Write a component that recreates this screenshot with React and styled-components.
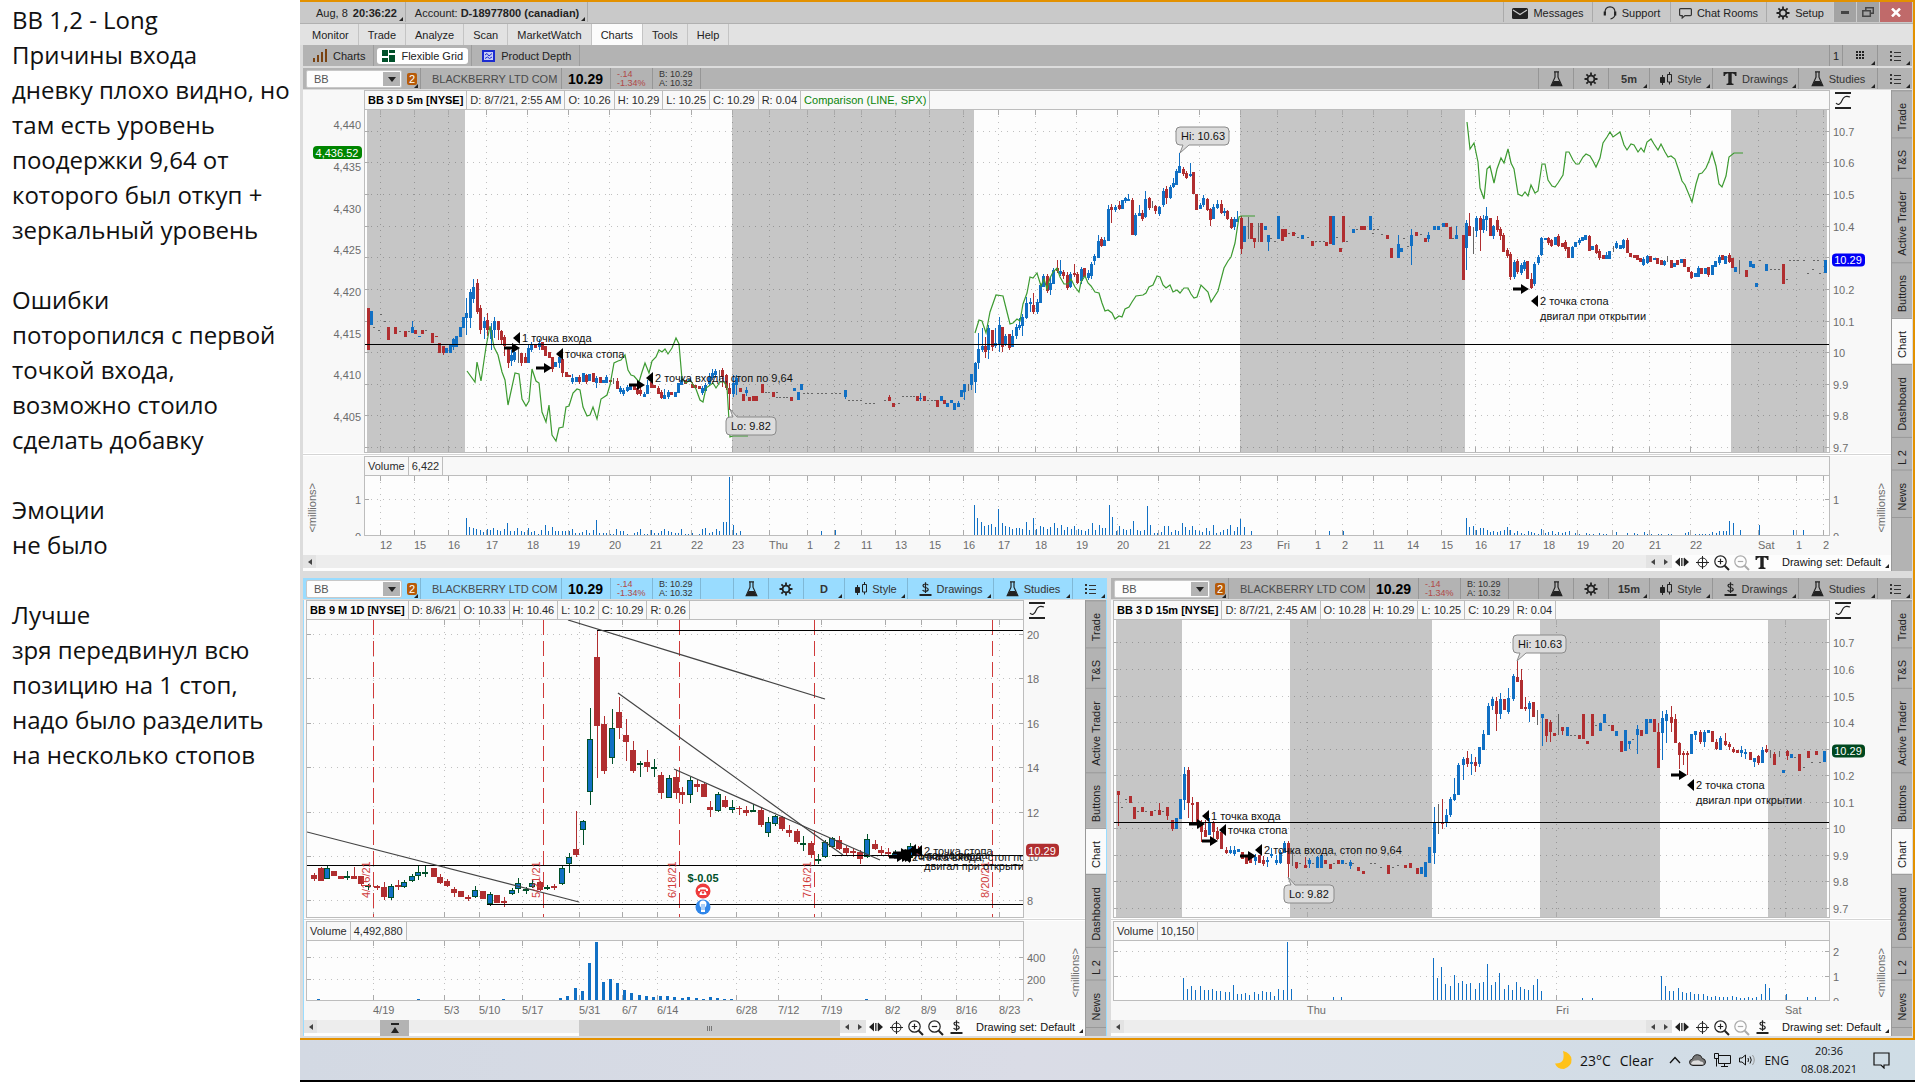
import React from 'react'
import styled, { createGlobalStyle, css } from 'styled-components'

const colors = {
  accent: '#e39100',
  bar: '#c9c9c9',
  menu: '#e2e2e2',
  tool: '#b3b3b3',
  active: '#99dcff',
  panel: '#f8f8f8',
  line: '#bdbdbd',
  up: '#1170c4',
  down: '#b02e30',
  flat: '#666666',
  outline: '#00502a',
  session: '#c6c6c6',
  compare: '#3c9a30',
}

const GlobalStyle = createGlobalStyle`
* { box-sizing: border-box; }
body {
  margin: 0;
  background: #fff;
  font-family: 'Liberation Sans', Arial, sans-serif;
  font-size: 11px;
  color: #222;
}
button, input {
  font: inherit;
  color: inherit;
  border: 0;
  padding: 0;
  background: none;
}
p { margin: 0; }
`

/* ---------- chart data ---------- */

// each entry: kind + x, body top, body bottom [, wick top, wick bottom]
// kinds: b up, r down, g flat with body, w wick only, d dash
const parseCandles = (text) =>
  text.split(',').map((item) => {
    const s = item.trim()
    const [x, top, bottom, hi, lo] = s.slice(1).split(' ').map(Number)
    const end = bottom === undefined ? top + 1 : bottom
    return { kind: s[0], x, top, bottom: end, hi: hi === undefined ? top : hi, lo: lo === undefined ? end : lo }
  })

const dashes = (y, ...xs) => xs.map((x) => ({ kind: 'd', x, top: y, bottom: y + 1, hi: y, lo: y + 1 }))

const bars = (start, pitch, heights) => heights.map((h, i) => [Math.round(start + i * pitch), h])

const mainCandles = [
  ...parseCandles(`r368 308 350, b371 311 325, r388 327 340, r395 327 334, r405 331 337, b412 327 333 321 333, r415 330 334, b419 336 337,
  r422 330 334, r432 333 343, r436 336 337, r439 343 353, r443 346 353 346 355, b446 348 353, b450 345 353, b453 339 347 338 350,
  b456 336 347, b460 327 337, b463 317 328, b466 313 318 298 335, b470 292 318 289 328, b473 287 299 279 303, r477 283 312 279 314,
  r480 308 330 305 334, b484 321 328 317 339, r487 320 330 313 336, b491 330 339 323 350, b494 321 330 317 338, r498 321 330 321 340,
  r501 331 340 330 344, r504 337 346 335 356, r508 347 363 347 368, b511 355 361 350 366, b514 352 360 350 362, w518 349 363,
  r521 353 363 353 366, r525 357 363 353 363, b528 348 363 345 363, b531 344 350 342 352, r535 344 348, b539 343 347 339 350,
  r542 342 350, r545 346 356, r549 352 358, r552 357 369 357 372, b555 362 367, b559 357 363 354 368, r562 359 373 359 377,
  r566 372 377, r569 375 377, b572 378 382 374 384, b576 377 382, r579 377 382 375 384, b583 373 382, r586 375 382 374 384,
  b589 374 381, r593 373 382, b596 378 383 376 388, r600 377 383, b603 380 383, b606 377 383 375 383, r610 380 382, w613 378 384,
  r617 381 389 378 389, b620 388 392 386 394, b623 390 394 388 396, b627 387 391 385 392, b630 386 390, r634 385 390, r637 388 394 386 395,
  r640 390 394 386 396, b644 394 397 392 397, b647 385 394 380 394, r651 382 388 380 388, r654 385 388, r658 388 394 386 394,
  r661 392 398 390 399, b664 395 399 389 399, b668 392 397 390 399, r671 392 395, b675 392 397, b678 383 393, b681 380 385 377 385,
  r685 380 384, b689 379 382, r692 384 388 382 388, r695 385 388, r699 386 389, b702 388 393 386 395, b705 385 391 383 391,
  b709 377 384 373 386, b712 373 378 369 380, b715 371 375 369 378, w719 370 380, r722 370 377 368 387, r726 375 388 374 390,
  r729 388 394 383 410, b733 383 394 375 397, b736 378 385 375 395, r740 388 392, r743 394 401, b746 390 393 387 396, r749 397 401,
  r753 396 401, r756 396 401, r762 384 393, r773 392 397, r791 397 401, b794 388 391, b798 392 400, b801 384 390, b845 390 397 390 399,
  r889 397 401 395 401, r893 403 407, r917 396 401, b920 398 399 393 401, r924 396 401, r937 400 407, b941 396 401, r944 400 404, b947 403 407,
  b951 400 403, b954 403 410, b958 403 407 401 407, b961 390 397, b964 384 392 384 400, w968 384 391, b971 374 385 374 390,
  b975 363 382 362 393, b978 349 363 333 369, b982 346 350 328 352, r985 346 352 337 358, b988 328 350 325 359, r992 330 347 330 351,
  b995 343 346 328 348, b999 325 345 317 352, r1002 327 347 327 352, b1005 336 344 334 346, r1009 334 348 334 350, b1012 336 347 330 347,
  b1016 327 336 324 339, b1019 325 328 318 330, b1022 317 326 314 336, b1026 303 318 297 319, b1030 302 304 298 312, r1033 305 312 293 314,
  b1037 302 312 299 314, b1040 285 303 283 303, b1043 276 287 274 287, r1047 276 291 274 293, b1050 283 290 277 295, b1053 270 284 268 284,
  r1057 268 271 260 273, b1060 271 274 260 276, r1063 272 276 270 279, r1067 275 288 272 290, b1070 274 287 272 288, r1074 273 275 264 277,
  r1077 274 283 272 284, b1081 269 281 267 284, r1084 268 277, b1088 273 278 270 280, b1091 264 276 262 279, b1094 256 261 254 265,
  b1098 241 258 235 258, r1101 239 246 237 247, b1104 240 246 237 246, b1108 209 241 205 241, r1111 207 210 204 223, b1115 207 210 205 212,
  r1119 205 209 201 210, b1122 200 209, b1125 198 201 197 203, b1128 199 201 194 201, r1132 200 235 198 235, b1135 215 235 213 236,
  b1139 213 216 205 216, r1142 213 219 210 221, b1145 199 217 191 218, r1149 198 208 197 210, w1152 201 208, r1155 206 211 205 214,
  b1159 207 214 206 216, b1163 191 205 188 207, r1166 189 198 186 204, b1170 187 198 185 199, b1173 183 187 178 188, b1176 171 185 169 185,
  b1179 166 173 153 173, r1183 169 174 167 176, r1186 173 178 171 179, b1190 174 176 163 177, r1193 172 194, r1196 194 210, b1200 205 209 203 209,
  b1203 198 205 195 207, r1207 199 210 198 211, r1210 209 220 208 226, b1213 207 219 204 219, b1217 204 208 200 209, r1221 204 213 200 214,
  b1224 211 213 208 216, r1227 211 219 210 220, r1231 219 228 217 229, b1234 219 227 217 230, b1237 219 222 211 222, r1241 218 249 216 254,
  b1244 226 242, w1248 217 239, r1251 223 239, r1254 238 242 238 248, w1258 223 242, r1261 223 242, b1265 226 230, b1268 235 242 235 251,
  b1278 216 239, r1282 229 241, r1285 229 237, r1293 232 236, b1302 235 239, r1312 241 246, r1326 242 246, r1330 216 244, b1333 216 245,
  r1340 248 252, r1343 216 242, b1353 229 233, r1361 226 230, r1364 226 230, b1370 216 230, r1387 235 239, r1391 248 258, b1398 244 258 235 258,
  b1401 248 252, b1411 235 246 229 265, r1416 232 236, r1425 238 242, b1428 235 239 232 242, b1434 226 230, b1438 226 230, b1443 223 227,
  r1446 223 227, r1450 227 239, b1456 235 239 226 239, r1463 235 280, b1466 223 248 220 270, r1469 226 236 213 236, w1473 227 254,
  b1476 218 231 216 237, r1480 218 230 216 251, b1483 219 230 215 233, b1486 216 220 207 231, r1490 218 236, b1493 226 236 225 239,
  r1497 220 230 216 232, r1500 229 236 227 240, r1503 235 252 233 252, r1507 250 256 248 258, r1510 254 277 252 280, b1514 262 277 260 279,
  r1517 261 272 259 274, b1521 265 273 263 275, b1524 262 269 260 271, r1527 261 279, r1531 279 288 273 289, b1534 264 284 262 286,
  b1538 257 263 255 265, b1541 238 255 237 256, b1545 238 240, r1548 238 243 237 245, r1551 240 246 239 247, b1555 237 245, r1558 236 246 234 247,
  r1562 243 247, r1565 242 249 240 251, r1568 247 258, b1572 247 258 246 258, b1575 242 247, b1579 240 243 238 245, b1582 237 241, b1585 235 240,
  r1589 236 251 235 251, b1592 246 250, r1596 245 253 244 254, r1599 251 258 249 260, r1603 255 259, b1606 255 259 252 259, b1609 251 259,
  w1613 246 252, b1616 243 248 241 249, b1620 245 249, b1623 240 248 239 249, r1627 240 253 238 253, r1630 253 257, r1634 255 258,
  r1637 255 260, r1640 258 262, b1643 259 265 257 266, b1647 256 263 255 264, r1650 256 262, b1654 258 260, r1657 258 264, r1661 260 265,
  b1664 261 265 260 266, w1667 256 262, r1671 260 268, b1674 263 267, r1677 260 265, b1681 259 263, r1684 259 267, r1688 267 272,
  r1691 272 278 271 279, b1695 273 277, b1698 268 277 266 277, r1701 268 274, b1705 268 274, r1708 267 275 267 277, b1712 265 275,
  b1715 261 267, b1719 257 263 255 265, r1722 255 260, b1725 256 264, r1729 255 262 253 263, r1732 258 268, b1735 267 272, w1739 260 274,
  r1746 270 277, b1750 261 267, b1753 264 268, b1756 283 287, b1766 264 271, r1783 264 284, b1825 260 273`),
  ...dashes(327, 374), ...dashes(314, 381), ...dashes(321, 385), ...dashes(331, 400, 409), ...dashes(330, 426, 379),
  ...dashes(397, 777, 780, 784, 787), ...dashes(393, 804, 808, 812, 818, 822, 826, 832, 836, 840),
  ...dashes(400, 849, 853, 857, 861, 885, 928, 932, 935), ...dashes(403, 866, 870, 874, 899), ...dashes(396, 903, 907, 911, 914),
  ...dashes(392, 766, 769, 777), ...dashes(238, 1271), ...dashes(241, 1275, 1316, 1320, 1324, 1347), ...dashes(233, 1289, 1295, 1373),
  ...dashes(237, 1298, 1308, 1337), ...dashes(229, 1374, 1378, 1357), ...dashes(234, 1382, 1421), ...dashes(238, 1404, 1453),
  ...dashes(246, 1408), ...dashes(260, 1760, 1790, 1794, 1798, 1804, 1814, 1818), ...dashes(269, 1771, 1775, 1779, 1813), ...dashes(279, 1787),
  ...dashes(273, 1808, 1820),
]

const comparison = [
  '467,371 475,382 477,362 481,381 486,347 490,326 494,347 498,355 502,372 505,380 508,405 515,373 519,374 522,399 526,406 529,401 532,369 536,381 539,383 542,412 546,422 549,405 552,435 556,441 559,428 563,427 566,407 569,406 573,393 577,389 580,390 583,407 587,416 590,415 593,407 597,419 601,399 607,395 610,385 614,363 618,361 621,360 625,355 628,370 631,375 634,376 639,382 642,372 645,363 649,373 652,361 656,357 659,350 662,352 665,349 668,354 672,348 676,338 679,344 682,379 686,383 690,380 696,389 700,400 703,402 706,388 713,383 716,388 720,382 724,382 727,387 730,437 733,436 748,436',
  '975,333 979,320 982,321 986,333 990,312 996,295 1003,296 1006,308 1010,324 1013,323 1017,319 1020,321 1023,304 1027,293 1030,277 1033,278 1037,273 1041,286 1044,279 1047,289 1050,278 1053,272 1057,268 1060,277 1064,284 1068,284 1071,279 1075,287 1079,292 1081,282 1085,276 1088,283 1091,286 1095,292 1099,293 1102,303 1105,311 1108,310 1112,313 1115,319 1119,316 1122,317 1125,309 1129,307 1132,302 1136,296 1143,295 1146,293 1149,287 1153,285 1157,276 1160,277 1163,285 1166,288 1170,285 1173,292 1177,290 1180,293 1184,288 1188,288 1191,294 1194,298 1197,297 1201,285 1208,292 1211,302 1218,291 1224,268 1228,261 1231,257 1235,243 1239,217 1241,216 1255,216',
  '1467,122 1470,149 1474,143 1478,162 1480,188 1484,199 1487,169 1490,166 1494,183 1497,169 1501,158 1504,163 1508,149 1511,163 1514,169 1518,194 1522,196 1525,192 1528,196 1531,185 1535,193 1538,191 1542,164 1545,164 1548,180 1552,186 1555,187 1558,183 1563,175 1566,152 1569,152 1573,160 1576,164 1579,164 1583,157 1586,154 1590,156 1593,161 1596,167 1600,158 1603,143 1607,137 1610,132 1613,137 1620,132 1624,145 1627,150 1631,144 1634,145 1638,152 1641,148 1644,152 1647,142 1651,139 1654,144 1658,150 1661,144 1665,152 1668,157 1671,156 1675,159 1679,171 1682,181 1685,185 1692,202 1696,184 1699,174 1702,173 1706,168 1709,161 1712,152 1716,166 1719,184 1722,187 1726,176 1729,157 1734,153 1743,153',
]

const mainVolume = [
  ...bars(466, 3.42, [17, 8, 7, 6, 5, 3, 6, 5, 7, 5, 4, 6, 12, 4, 4, 7, 4, 3, 7, 3, 4, 1, 5, 10, 4, 8, 4, 4, 4, 4, 4, 6, 2, 2, 3, 5, 2, 5, 15, 2, 2, 2, 1, 1, 6, 4, 4, 1, 0, 2, 3, 6, 1, 1, 5, 2, 2, 4, 6, 4, 3, 2, 2, 6, 1, 1, 2, 0, 1, 6, 7, 2, 3, 6, 4, 13, 13, 58, 10, 2, 4]),
  [821, 4], [835, 5],
  ...bars(974, 3.46, [30, 17, 13, 9, 10, 11, 8, 26, 12, 9, 8, 6, 7, 7, 6, 13, 5, 17, 6, 9, 8, 6, 8, 12, 7, 10, 5, 8, 6, 9, 6, 5, 4, 6, 12, 5, 10, 7, 7, 30, 18, 4, 9, 6, 5, 6, 14, 5, 4, 5, 29, 10, 2, 2, 3, 9, 9, 3, 5, 4, 12, 8, 5, 9, 5, 4, 3, 7, 4, 10, 2, 3, 5, 6, 10, 4, 8, 16, 8, 0, 4]),
  [1329, 4], [1343, 4],
  ...bars(1466, 3.42, [17, 8, 9, 5, 7, 7, 5, 3, 4, 3, 4, 5, 8, 5, 2, 4, 2, 1, 4, 3, 2, 1, 6, 2, 3, 4, 1, 3, 2, 3, 4, 0, 2, 1, 0, 2, 1, 1, 0, 2, 1, 1, 0, 0, 3, 0, 0, 2, 0, 2, 1, 0, 3, 1, 1, 0, 1, 1, 0, 1, 1, 0, 0, 0, 2, 3, 0, 1, 1, 1, 1, 1, 3, 2, 4, 4, 4, 14, 12, 0, 5]),
  [1759, 10], [1793, 5], [1803, 5],
]

const dayCandles = parseCandles(`r314 875 879 873 881, r321 868 881 867 881, b327 868 879 866 879, r334 871 876, r341 876 879, g347 876 878 871 880,
  r354 876 879 867 879, r361 876 884 876 886, g368 885 887 884 890, r377 886 888 885 890, r384 887 897 882 900, b391 886 898 884 900, r398 885 887 880 890,
  b404 882 887 880 888, b412 876 881 874 882, b418 872 876 865 880, g425 872 874 865 877, r434 868 877, r440 877 883 874 884, r447 881 886 879 887,
  r454 889 893 887 897, r461 891 897, r468 897 899 895 901, b475 890 897 886 898, r483 891 899, b490 894 904 892 906, r497 895 903, r504 901 903 897 907,
  b512 890 894 888 895, b518 883 889 878 893, g526 889 891 887 894, b532 883 887 880 888, r540 882 890 881 891, g547 887 889 885 890, r554 886 888 884 890,
  b562 868 884 866 885, b569 857 864 853 873, r576 849 855 811 857, b583 821 830 820 845, b590 739 792 708 805, r597 657 726 630 778,
  r604 724 771 716 774, b612 728 758 709 764, r619 712 728 697 739, r626 735 742 719 761, r633 750 771 741 773, g640 763 765 761 777,
  r647 762 767 750 772, g654 767 769 759 777, r661 775 793 772 799, b669 778 798 775 798, r676 777 793 770 799, r682 792 795 787 804,
  b690 780 795 777 803, r697 784 787 780 792, r704 784 797 782 797, r710 807 810 801 817, b718 794 811 792 812, r725 800 807 796 808,
  b732 807 810 800 813, r739 808 809 806 815, r746 810 813 806 816, g753 810 812 804 812, r761 810 825 808 827, b768 822 833 817 837,
  b775 816 824 815 826, r782 817 829 816 831, r789 830 833 825 837, r797 831 842 829 844, b803 843 845 836 851, r811 843 855 841 858,
  g818 859 861 854 864, b825 842 857 840 858, b832 838 847 837 848, r839 840 849 836 850, r846 848 853 846 856, r853 851 853 848 857,
  r860 852 859 850 864, b867 839 857 834 858, r875 844 849 840 850, r881 850 853 846 856, r888 852 854 848 857, b895 853 856 850 858,
  r902 854 858 851 860, b910 846 858 843 860, r918 850 854 846 857`)

const quarterCandles = [
  ...parseCandles(`r1118 791 795 791 826, r1130 796 803, r1134 807 819, r1142 807 812, r1151 811 816, r1159 810 815 803 815, r1167 807 816 807 820,
  r1172 820 829 820 831, b1176 818 829, b1180 799 819, b1184 774 800 767 810, r1188 770 803 767 818, r1192 803 805 797 825, r1197 802 823 802 827,
  r1201 823 832 820 842, r1205 830 837 820 837, b1209 822 835 818 835, r1213 823 832 821 838, r1217 831 839 827 840, r1221 832 849 830 849,
  r1226 850 853 847 854, b1230 850 853 846 854, b1234 850 854 846 856, b1238 849 852, r1242 852 859, r1246 857 864, r1250 857 863,
  b1255 857 861 854 865, r1259 855 863, r1263 860 864 856 866, b1267 860 862 857 867, b1271 854 856 848 858, b1276 860 863 855 865,
  b1280 852 863 850 864, b1284 843 853 841 853, r1288 843 864 841 877, w1292 850 866, r1296 862 868 862 869, r1305 865 868 857 868, b1309 860 864 858 868,
  b1317 857 868 856 868, b1321 855 868, r1325 860 864, r1330 864 869, r1338 860 864, b1342 860 864, b1350 862 866 860 869,
  r1358 867 871, r1363 871 874, r1388 865 874, r1405 865 868, r1410 863 868, r1417 868 874, b1421 867 874, b1425 862 877, b1429 847 863,
  b1434 822 853 807 864, w1438 804 834, r1442 822 824 799 829, b1446 815 823 809 827, b1450 799 815 797 817, b1454 794 800 778 801,
  b1458 765 795 763 795, b1463 759 765 757 780, r1467 758 764 751 767, b1471 762 764 754 775, r1475 762 766 757 772, b1479 747 764 747 767,
  b1483 734 750 730 750, b1488 706 735 703 735, b1492 699 706 697 710, r1496 701 714 697 731, b1500 699 714 693 719, r1504 699 710,
  b1508 698 712 688 714, b1513 676 699 674 701, r1517 677 682 661 682, r1521 680 709 669 709, r1525 707 709 697 711, b1529 703 709 701 722,
  r1533 702 717, w1537 710 725, b1542 714 718 714 746, r1546 719 736 719 742, r1550 722 732 720 742, r1554 733 736, w1558 714 735,
  r1562 727 731 727 735, b1567 727 736, r1579 735 739, r1583 714 739, r1587 741 744, r1592 714 736, b1600 723 731, b1604 714 723,
  r1612 725 731, b1616 731 736, r1621 741 752, b1625 730 751, b1629 741 744 741 749, b1637 729 735 725 754, r1641 730 736, b1646 719 734,
  b1650 719 723, r1654 719 732, r1658 732 768 723 768, b1662 718 733 711 760, b1666 714 721 710 743, r1671 717 723 706 732, r1675 719 743 714 743,
  r1679 743 755 742 769, r1683 753 755 751 765, r1687 753 755 751 775, b1691 734 754, b1695 731 735 731 740, r1700 732 742 730 744,
  b1704 732 742 730 747, b1708 730 733, r1712 731 742, r1716 742 749 739 750, b1720 738 750 736 750, r1725 741 745 733 746, r1729 744 747 742 750,
  r1733 749 752 747 753, r1737 750 753, b1741 750 753 746 757, b1745 752 754 749 759, r1750 752 760, b1754 758 762 758 767, r1758 756 763 755 765,
  b1762 750 763 747 763, r1766 749 752 745 753, w1770 750 758, r1774 754 765 752 765, w1779 751 757, b1783 770 773, r1787 751 756 750 760,
  b1791 754 758, r1799 754 771, r1808 751 758, r1816 751 755, b1824 751 762`),
  ...dashes(807, 1122), ...dashes(799, 1126), ...dashes(811, 1138, 1146, 1163), ...dashes(810, 1155), ...dashes(863, 1353, 1371, 1375, 1300, 1313, 1334, 1346),
  ...dashes(867, 1381, 1393), ...dashes(865, 1398), ...dashes(735, 1571, 1575), ...dashes(725, 1596, 1609), ...dashes(739, 1633), ...dashes(757, 1795),
  ...dashes(767, 1804), ...dashes(762, 1812, 1820),
]

const mainChart = {
  name: 'main',
  x: 365, y: 110, w: 1464, h: 342, candleWidth: 3,
  title: 'BB 3 D 5m [NYSE]',
  cells: ['D: 8/7/21, 2:55 AM', 'O: 10.26', 'H: 10.29', 'L: 10.25', 'C: 10.29', 'R: 0.04'],
  study: 'Comparison (LINE, SPX)',
  interval: '5m',
  gutter: 61,
  textTool: true,
  sessions: [[367, 465], [732, 974], [1240, 1465], [1731, 1827]],
  prices: [['10.7', 131], ['10.6', 162], ['10.5', 194], ['10.4', 226], ['10.2', 289], ['10.1', 321], ['10', 352], ['9.9', 384], ['9.8', 415], ['9.7', 447]],
  hidden: [257],
  left: [['4,440', 124], ['4,435', 166], ['4,430', 208], ['4,425', 249], ['4,420', 291], ['4,415', 333], ['4,410', 374], ['4,405', 416]],
  leftTag: ['4,436.52', 152, '#008500'],
  tag: ['10.29', 259, '#0000f5', 33],
  times: [[380, '12'], [414, '15'], [448, '16'], [486, '17'], [527, '18'], [568, '19'], [609, '20'], [650, '21'], [691, '22'], [732, '23'], [769, 'Thu'], [807, '1'], [834, '2'], [861, '11'], [895, '13'], [929, '15'], [963, '16'], [998, '17'], [1035, '18'], [1076, '19'], [1117, '20'], [1158, '21'], [1199, '22'], [1240, '23'], [1277, 'Fri'], [1315, '1'], [1342, '2'], [1373, '11'], [1407, '14'], [1441, '15'], [1475, '16'], [1509, '17'], [1543, '18'], [1577, '19'], [1612, '20'], [1649, '21'], [1690, '22'], [1758, 'Sat'], [1796, '1'], [1823, '2']],
  candles: mainCandles,
  compare: comparison,
  levels: [[365, 1829, 344]],
  trends: [],
  notes: [
    { arrow: [520, 348], tip: [513, 338], text: ['1 точка входа'] },
    { arrow: [552, 368], tip: [556, 354], text: ['точка стопа'] },
    { arrow: [645, 385], tip: [646, 378], text: ['2 точка входа, стоп по 9,64'] },
    { arrow: [1529, 289], tip: [1531, 301], text: ['2 точка стопа', 'двигал при открытии'] },
  ],
  hi: { at: [1180, 153], text: 'Hi: 10.63' },
  lo: { at: [730, 409], text: 'Lo: 9.82' },
  volume: { value: '6,422', y: 476, ticks: [['1', 499]], bars: mainVolume, barWidth: 1, leftLabels: true },
}

const dayChart = {
  name: 'day',
  x: 307, y: 620, w: 716, h: 297, candleWidth: 6, outlined: true,
  title: 'BB 9 M 1D [NYSE]',
  cells: ['D: 8/6/21', 'O: 10.33', 'H: 10.46', 'L: 10.2', 'C: 10.29', 'R: 0.26'],
  interval: 'D',
  gutter: 2,
  zoomedIn: true,
  sessions: [],
  prices: [['20', 634], ['18', 678], ['16', 723], ['14', 767], ['12', 812], ['10', 856], ['8', 900]],
  hidden: [],
  tag: ['10.29', 849, '#b02e30', 33],
  times: [[373, '4/19'], [444, '5/3'], [479, '5/10'], [522, '5/17'], [579, '5/31'], [622, '6/7'], [657, '6/14'], [736, '6/28'], [778, '7/12'], [821, '7/19'], [885, '8/2'], [921, '8/9'], [956, '8/16'], [999, '8/23']],
  expirations: [[373, '4/16/21'], [543, '5/21/21'], [679, '6/18/21'], [814, '7/16/21'], [992, '8/20/21']],
  candles: dayCandles,
  compare: [],
  levels: [[597, 1023, 630], [307, 1023, 865], [487, 1023, 904], [832, 1023, 855]],
  trends: [[568, 620, 825, 699], [618, 693, 843, 855], [674, 769, 880, 860], [307, 832, 579, 902]],
  notes: [
    { arrow: [905, 857], tip: [899, 855], text: [] },
    { arrow: [910, 857], tip: [904, 856], text: ['точка стопа'] },
    { arrow: [909, 853], tip: [909, 850], text: ['1 точка входа'], drop: 5 },
    { arrow: [913, 857], tip: [903, 857], text: ['2 точка входа, стоп по 9,64'] },
    { arrow: [920, 851], tip: [915, 851], text: ['2 точка стопа', 'двигал при открытии'] },
  ],
  event: { x: 703, y: 877 },
  volume: { value: '4,492,880', y: 941, ticks: [['400', 957], ['200', 979]], barWidth: 3, bars: [[318, 1], [418, 1], [503, 1], [560, 2], [567, 4], [575, 12], [582, 9], [589, 37], [596, 58], [603, 18], [610, 21], [617, 17], [624, 10], [631, 7], [639, 5], [646, 4], [653, 3], [660, 4], [667, 4], [674, 3], [682, 2], [688, 3], [696, 2], [703, 1], [710, 3], [717, 2], [724, 1], [731, 1], [866, 1]] },
}

const quarterChart = {
  name: 'quarter',
  x: 1114, y: 620, w: 715, h: 297, candleWidth: 3,
  title: 'BB 3 D 15m [NYSE]',
  cells: ['D: 8/7/21, 2:45 AM', 'O: 10.28', 'H: 10.29', 'L: 10.25', 'C: 10.29', 'R: 0.04'],
  interval: '15m',
  gutter: 2,
  sessions: [[1116, 1182], [1290, 1432], [1540, 1660], [1768, 1827]],
  prices: [['10.7', 642], ['10.6', 669], ['10.5', 696], ['10.4', 722], ['10.2', 775], ['10.1', 802], ['10', 828], ['9.9', 855], ['9.8', 881], ['9.7', 908]],
  hidden: [749],
  tag: ['10.29', 750, '#00481f', 33],
  times: [[1307, 'Thu'], [1556, 'Fri'], [1785, 'Sat']],
  candles: quarterCandles,
  compare: [],
  levels: [[1114, 1829, 822]],
  trends: [],
  notes: [
    { arrow: [1205, 824], tip: [1202, 816], text: ['1 точка входа'] },
    { arrow: [1218, 841], tip: [1219, 830], text: ['точка стопа'] },
    { arrow: [1256, 856], tip: [1255, 850], text: ['2 точка входа, стоп по 9,64'] },
    { arrow: [1687, 775], tip: [1687, 785], text: ['2 точка стопа', 'двигал при открытии'] },
  ],
  hi: { at: [1517, 661], text: 'Hi: 10.63' },
  lo: { at: [1288, 877], text: 'Lo: 9.82' },
  volume: {
    value: '10,150', y: 941, ticks: [['2', 951], ['1', 976]], barWidth: 1,
    bars: [
      ...bars(1183, 4.15, [22, 11, 14, 10, 14, 10, 10, 11, 9, 9, 8, 8, 15, 6, 6, 7, 5, 8, 6, 9, 8, 8, 4, 11, 10, 58, 11]),
      [1333, 3], [1341, 3],
      ...bars(1433, 4.15, [42, 22, 33, 16, 14, 25, 17, 19, 16, 17, 11, 17, 18, 36, 15, 18, 27, 11, 15, 10, 18, 13, 11, 10, 15, 21, 9]),
      [1582, 2], [1592, 2],
      ...bars(1661, 4.15, [24, 14, 9, 9, 12, 8, 7, 8, 6, 6, 6, 4, 3, 4, 3, 3, 3, 4, 3, 2, 2, 3, 2, 3, 6, 16, 12]),
      [1786, 6], [1807, 3], [1815, 3],
    ],
  },
}

const sideTabs = ['Trade', 'T&S', 'Active Trader', 'Buttons', 'Chart', 'Dashboard', 'L 2', 'News']
const menuTabs = ['Monitor', 'Trade', 'Analyze', 'Scan', 'MarketWatch', 'Charts', 'Tools', 'Help']

const journal = [
  ['BB 1,2 - Long', 'Причины входа', 'дневку плохо видно, но', 'там есть уровень', 'поодержки 9,64 от', 'которого был откуп +', 'зеркальный уровень'],
  ['Ошибки', 'поторопился с первой', 'точкой входа,', 'возможно стоило', 'сделать добавку'],
  ['Эмоции', 'не было'],
  ['Лучше', 'зря передвинул всю', 'позицию на 1 стоп,', 'надо было разделить', 'на несколько стопов'],
]

/* ---------- icons ---------- */

const FlaskIcon = () => (
  <svg width="13" height="16" viewBox="0 0 13 16" fill="none" stroke="#222">
    <path d="M4 .8h5M5 1v5.2L1.2 14.6h10.6L8 6.2V1" strokeWidth="1.2" />
    <path d="M3.6 10h5.8l2.4 5H1.2z" fill="#222" stroke="none" />
  </svg>
)
const GearIcon = () => (
  <svg width="14" height="14" viewBox="0 0 14 14" fill="none" stroke="#222">
    <circle cx="7" cy="7" r="3.4" strokeWidth="1.8" />
    <path d="M7 .5v2.6M7 10.9v2.6M.5 7h2.6M10.9 7h2.6M2.4 2.4l1.8 1.8M9.8 9.8l1.8 1.8M2.4 11.6l1.8-1.8M9.8 4.2l1.8-1.8" strokeWidth="1.8" />
  </svg>
)
const CandleIcon = () => (
  <svg width="12" height="14" viewBox="0 0 12 14" fill="none" stroke="#222">
    <path d="M2.5 3v10M9.5 0v3M9.5 10v2.5" />
    <path d="M.5 5.500h4v5h-4z" fill="#222" />
    <path d="M7.500 2.500h4v7.500h-4z" />
  </svg>
)
const TextIcon = () => (
  <svg width="14" height="13" viewBox="0 0 14 13" fill="#222">
    <path d="M.5 0h13v4h-1.300Q12 1.600 9.800 1.500H8.700v9.200q0 1 1.800 1V13h-7v-1.300q1.800 0 1.800-1V1.500H4.200Q2 1.600 1.800 4H.5z" />
  </svg>
)
const DollarIcon = () => (
  <svg width="13" height="14" viewBox="0 0 13 14" fill="none" stroke="#222">
    <path d="M9.300 3.300Q8.500 2 6.500 2 4 2 4 3.800q0 1.300 2.500 1.700Q9.200 6 9.200 7.600 9.200 9.300 6.500 9.300 4.300 9.300 3.600 7.900M6.500.3V11" strokeWidth="1.200" />
    <path d="M.5 13h12" strokeWidth="2" />
  </svg>
)
const ListIcon = () => (
  <svg width="11" height="10" viewBox="0 0 11 10" fill="#333" shapeRendering="crispEdges">
    <path d="M0 0h2v2H0zM0 4h2v2H0zM0 8h2v2H0z" />
    <path d="M4 1h7v1H4zM4 5h7v1H4zM4 9h7v1H4z" />
  </svg>
)
const GridIcon = () => (
  <svg width="8" height="9" viewBox="0 0 8 9" stroke="#222" shapeRendering="crispEdges">
    <path d="M0 1h8M0 4h8M0 7h8" strokeWidth="2" strokeDasharray="2 1" />
  </svg>
)
const MailIcon = () => (
  <svg width="16" height="11" viewBox="0 0 16 11">
    <rect width="16" height="11" rx="1.500" fill="#222" />
    <path d="M1 2l7 4.500L15 2" fill="none" stroke="#c9c9c9" strokeWidth="1.200" />
  </svg>
)
const HeadsetIcon = () => (
  <svg width="14" height="14" viewBox="0 0 14 14" fill="none" stroke="#222" strokeWidth="1.200">
    <path d="M2 7.500C1.500 3 4 .8 7 .8S12.500 3 12 7.500M12.200 8q-.5 4-4.700 5" />
    <path d="M1.800 5.500v4M12.200 5.500v4" strokeWidth="2.200" />
  </svg>
)
const ChatIcon = () => (
  <svg width="13" height="11" viewBox="0 0 13 11" fill="none" stroke="#333" strokeWidth="1.200">
    <path d="M1.600.6h9.800q1 0 1 1v5q0 1-1 1H6L3.200 10V7.600H1.600q-1 0-1-1v-5q0-1 1-1z" />
  </svg>
)
const ScaleIcon = () => (
  <svg width="16" height="17" viewBox="0 0 16 17" fill="none" stroke="#222">
    <path d="M0 1h16M0 16h16" strokeWidth="2" />
    <path d="M1 11c2 2.500 4.500 1.500 6-2.500S11 3.500 15 5" strokeWidth="1.200" />
  </svg>
)
const ChartsIcon = () => (
  <svg width="14" height="13" viewBox="0 0 14 13" stroke="#7a4210" strokeWidth="2" shapeRendering="crispEdges">
    <path d="M1 13V9M5 13V6M9 13V3M13 13V0" />
  </svg>
)
const FlexIcon = () => (
  <svg width="13" height="12" viewBox="0 0 13 12" fill="#00502a" shapeRendering="crispEdges">
    <path d="M0 0h6v6H0zM0 8h6v4H0zM7 0h6v3H7zM7 5h6v7H7z" />
  </svg>
)
const DepthIcon = () => (
  <svg width="13" height="12" viewBox="0 0 13 12" fill="none" stroke="#1b2bd0">
    <rect x="1" y="1" width="11" height="10" strokeWidth="2" fill="#c8cdf5" />
    <path d="M3 5l2-1.500L7 6l3-2.500M3 8.500L5.500 7l2 1.500L10 7" />
  </svg>
)
const PanIcon = () => (
  <svg width="14" height="10" viewBox="0 0 14 10" fill="#222">
    <path d="M0 5l5-4.500v9zM14 5L9 .5v9zM6 1h.8v8H6zM7.500 1h.8v8h-.8z" />
  </svg>
)
const CrossIcon = () => (
  <svg width="13" height="13" viewBox="0 0 13 13" fill="none" stroke="#222">
    <circle cx="6.500" cy="6.500" r="4.500" />
    <path d="M6.500 0v13M0 6.500h13" />
  </svg>
)
const ZoomIcon = ({ plus, faded }) => (
  <svg width="16" height="16" viewBox="0 0 16 16" fill="none" stroke={faded ? '#aaa' : '#222'} strokeWidth="1.200">
    <circle cx="6.500" cy="6.500" r="5.700" />
    <path d={plus ? 'M3.800 6.500h5.400M6.500 3.800v5.400' : 'M3.800 6.500h5.400'} />
    <path d="M10.700 10.700L15 15" strokeWidth="2" />
  </svg>
)
const Caret = ({ left }) => (
  <svg width="4" height="6" viewBox="0 0 4 6" fill="#444">
    <path d={left ? 'M4 0v6L0 3z' : 'M0 0v6l4-3z'} />
  </svg>
)
const DownIcon = () => (
  <svg width="8" height="5" viewBox="0 0 8 5" fill="#222"><path d="M0 0h8L4 5z" /></svg>
)

/* ---------- chart drawing ---------- */

const rect = (x, y, w, h) => `M${x} ${y}h${w}v${h}h${-w}z`

function Candles({ items, width, outlined }) {
  const paths = { up: '', down: '', flat: '', inner: '' }
  const half = Math.floor(width / 2)
  items.forEach((c) => {
    const key = { b: 'up', r: 'down', g: 'up', w: 'flat', d: 'flat' }[c.kind]
    const bodyH = Math.max(1, c.bottom - c.top)
    if (c.kind === 'd') {
      paths.flat += rect(c.x - 1, c.top, 2, 1)
      return
    }
    paths[key] += rect(c.x, c.hi, 1, c.lo - c.hi)
    if (c.kind === 'w') return
    paths[key] += rect(c.x - half, c.top, width, bodyH)
    if (outlined && c.kind === 'b' && bodyH > 2) {
      paths.inner += rect(c.x - half + 1, c.top + 1, width - 2, bodyH - 2)
    }
  })
  return (
    <g shapeRendering="crispEdges">
      <path d={paths.flat} fill={colors.flat} />
      <path d={paths.up} fill={outlined ? colors.outline : colors.up} />
      <path d={paths.inner} fill={colors.up} />
      <path d={paths.down} fill={colors.down} />
    </g>
  )
}

const percent = (value, start, size) => `${((value - start) / size) * 100}%`

function Note({ chart, note }) {
  const at = ([x, y]) => ({ x: percent(x, chart.x, chart.w), y: percent(y, chart.y, chart.h), overflow: 'visible' })
  return (
    <>
      <svg {...at(note.arrow)}>
        <path d="M-16-1.500h8V-5L0 0l-8 5V1.500h-8z" fill="#000" />
      </svg>
      <svg {...at(note.tip)}>
        <path d="M0 0l7-6V6z" fill="#000" />
        {note.text.map((line, i) => (
          <ChartText key={line} x="9" y={4 + (note.drop || 0) + i * 15}>{line}</ChartText>
        ))}
      </svg>
    </>
  )
}

function Callout({ chart, mark, below }) {
  const [x, y] = mark.at
  const d = below
    ? 'M0 0L3 8H0q-4 0-4 4v10q0 4 4 4h42q4 0 4-4V12q0-4-4-4H7z'
    : 'M0 0l3-8H0q-4 0-4-4v-10q0-4 4-4h45q4 0 4 4v10q0 4-4 4H9z'
  return (
    <svg x={percent(x, chart.x, chart.w)} y={percent(y, chart.y, chart.h)} overflow="visible">
      <path d={d} fill="#dcdcdc" stroke="#8a8a8a" />
      <ChartText x="1" y={below ? 21 : -13}>{mark.text}</ChartText>
    </svg>
  )
}

function Plot({ chart }) {
  const { x, y, w, h } = chart
  const rows = [...chart.prices.map((p) => p[1]), ...chart.hidden]
  const cols = chart.times.map((t) => t[0])
  return (
    <PlotSvg role="img" aria-label={chart.title}>
      <svg width="100%" height="100%" viewBox={`${x} ${y} ${w} ${h}`} preserveAspectRatio="none">
        {chart.sessions.map(([a, b]) => (
          <rect key={a} x={a} y={y} width={b - a} height={h} fill={colors.session} />
        ))}
        <g shapeRendering="crispEdges" stroke="#000" strokeOpacity="0.24" strokeDasharray="1 5">
          {rows.map((r) => <path key={r} d={`M${x} ${r + 0.5}h${w}`} />)}
          {cols.map((c) => <path key={c} d={`M${c + 0.5} ${y}v${h}`} />)}
        </g>
        <g shapeRendering="crispEdges" stroke="#aaa">
          {rows.map((r) => <path key={r} d={`M${x} ${r + 0.5}h4M${x + w} ${r + 0.5}h-4`} />)}
          {cols.map((c) => <path key={c} d={`M${c + 0.5} ${y}v5M${c + 0.5} ${y + h}v-5`} />)}
        </g>
        {chart.expirations && chart.expirations.map(([e]) => (
          <path key={e} d={`M${e + 0.5} ${y}v${h}`} stroke="#cf3a3a" strokeDasharray="15 6" shapeRendering="crispEdges" />
        ))}
        <Candles items={chart.candles} width={chart.candleWidth} outlined={chart.outlined} />
        {chart.compare.map((points) => (
          <polyline key={points.slice(0, 8)} points={points} fill="none" stroke={colors.compare} strokeWidth="1.200" />
        ))}
        {chart.levels.map(([a, b, r]) => (
          <path key={r} d={`M${a} ${r + 0.5}H${b}`} stroke="#000" shapeRendering="crispEdges" />
        ))}
        {chart.trends.map(([x1, y1, x2, y2]) => (
          <path key={x1} d={`M${x1} ${y1}L${x2} ${y2}`} stroke="#444" strokeWidth="1.200" />
        ))}
      </svg>
      {chart.expirations && chart.expirations.map(([e, label]) => (
        <svg key={e} x={percent(e, x, w)} y={percent(898, y, h)} overflow="visible">
          <ChartText transform="translate(-3 0) rotate(-90)" $tone="#cf3a3a">{label}</ChartText>
        </svg>
      ))}
      {chart.notes.map((n) => <Note key={n.tip.join()} chart={chart} note={n} />)}
      {chart.hi && <Callout chart={chart} mark={chart.hi} />}
      {chart.lo && <Callout chart={chart} mark={chart.lo} below />}
      {chart.event && (
        <svg x={percent(chart.event.x, x, w)} y={percent(chart.event.y, y, h)} overflow="visible">
          <ChartText textAnchor="middle" y="5" $tone="#00502a" $bold>$-0.05</ChartText>
          <circle cy="14" r="7.500" fill="#ee3b3b" />
          <path d="M-5 12q5-4 10 0v2H3v-1.500h-6V14h-2zM-3.500 18q0-4 3.500-4t3.500 4z" fill="#fff" />
          <circle cy="15.500" r="1.200" fill="#ee3b3b" />
          <circle cy="30" r="7.500" fill="#2f86ea" />
          <path d="M-3.500 27a3.500 3.500 0 1 1 7 0q0 2-1.500 3.500V35h-4v-4.500Q-3.500 29-3.500 27z" fill="#fff" />
          <path d="M-1 27v6M1 27v6" stroke="#2f86ea" strokeWidth=".8" />
        </svg>
      )}
    </PlotSvg>
  )
}

function VolumePlot({ chart }) {
  const { x, w, volume } = chart
  const base = volume.y + 59
  return (
    <PlotSvg role="img" aria-label="Volume">
      <svg width="100%" height="100%" viewBox={`${x} ${volume.y} ${w} 59`} preserveAspectRatio="none" shapeRendering="crispEdges">
        <g stroke="#000" strokeOpacity="0.24" strokeDasharray="1 5">
          {volume.ticks.map(([t, r]) => <path key={t} d={`M${x} ${r + 0.5}h${w}`} />)}
          {chart.times.map(([c]) => <path key={c} d={`M${c + 0.5} ${volume.y}v59`} />)}
        </g>
        <g stroke="#aaa">
          {volume.ticks.map(([t, r]) => <path key={t} d={`M${x} ${r + 0.5}h4M${x + w} ${r + 0.5}h-4`} />)}
          {chart.times.map(([c]) => <path key={c} d={`M${c + 0.5} ${volume.y}v5M${c + 0.5} ${base}v-5`} />)}
        </g>
        <path
          fill={colors.up}
          d={volume.bars.map(([bx, bh]) => rect(bx - Math.floor(volume.barWidth / 2), base - bh, volume.barWidth, bh)).join('')}
        />
      </svg>
    </PlotSvg>
  )
}

function Scale({ labels, y, h, tag, left, millions }) {
  return (
    <PlotSvg>
      {labels.map(([text, at]) => (
        <AxisText key={text} x={left ? 58 : 3} y={percent(at + 0.5, y, h)} dy="4" textAnchor={left ? 'end' : 'start'}>{text}</AxisText>
      ))}
      {tag && (
        <svg x="0" y={percent(tag[1], y, h)} overflow="visible">
          <rect x={left ? 10 : 2} y="-6" width={left ? 49 : 33} height="13" rx="4" fill={tag[2]} />
          <ChartText $tone="#fff" x={left ? 34 : 18} y="5" textAnchor="middle">{tag[0]}</ChartText>
        </svg>
      )}
      {millions && (
        <svg x={left ? 13 : 55} y="53%" overflow="visible">
          <AxisText transform="rotate(-90)" textAnchor="middle">&lt;millions&gt;</AxisText>
        </svg>
      )}
    </PlotSvg>
  )
}

/* ---------- panel ---------- */

function Toolbar({ chart, active }) {
  return (
    <ToolRow $active={active}>
      <SymbolBox>
        <SymbolInput aria-label="Symbol" defaultValue="BB" />
        <DropButton aria-label="Choose symbol"><DownIcon /></DropButton>
      </SymbolBox>
      <LinkButton aria-label="Link group 2"><span>2</span></LinkButton>
      <Company>BLACKBERRY LTD COM</Company>
      <Last>10.29</Last>
      <Quote $down><span>-.14</span><span>-1.34%</span></Quote>
      <Quote $wide><span>B: 10.29</span><span>A: 10.32</span></Quote>
      <Spacer />
      <Tool $width={35} aria-label="Edit studies"><FlaskIcon /></Tool>
      <Tool $width={35} aria-label="Chart settings"><GearIcon /></Tool>
      <Tool $width={41} $menu $bold>{chart.interval}</Tool>
      <Tool $width={63} $menu><CandleIcon />Style</Tool>
      <Tool $width={86} $menu>{chart.textTool ? <TextIcon /> : <DollarIcon />}Drawings</Tool>
      <Tool $width={79} $menu><FlaskIcon />Studies</Tool>
      <Tool $width={35} $menu aria-label="Panel menu"><ListIcon /></Tool>
    </ToolRow>
  )
}

function Footer({ chart }) {
  return (
    <FooterRow>
      <ScrollButton aria-label="Scroll to start"><Caret left /></ScrollButton>
      <Track>
        {chart.zoomedIn && (
          <>
            <CollapseButton aria-label="Collapse panel">
              <svg width="8" height="10" viewBox="0 0 8 10" fill="#222"><path d="M0 0h8v2H0zM4 4l4 6H0z" /></svg>
            </CollapseButton>
            <Thumb>
              <svg width="5" height="5" viewBox="0 0 5 5" stroke="#777" shapeRendering="crispEdges"><path d="M.5 0v5M2.500 0v5M4.500 0v5" /></svg>
            </Thumb>
          </>
        )}
      </Track>
      <ScrollButton aria-label="Scroll left"><Caret left /></ScrollButton>
      <ScrollButton aria-label="Scroll right"><Caret /></ScrollButton>
      <FootTool aria-label="Pan"><PanIcon /></FootTool>
      <FootTool aria-label="Crosshair"><CrossIcon /></FootTool>
      <FootTool aria-label="Zoom in"><ZoomIcon plus /></FootTool>
      <FootTool aria-label="Zoom out"><ZoomIcon faded={!chart.zoomedIn} /></FootTool>
      <FootTool aria-label="Drawing tool">{chart.textTool ? <TextIcon /> : <DollarIcon />}</FootTool>
      <DrawingSet>Drawing set: Default</DrawingSet>
    </FooterRow>
  )
}

function Panel({ chart, active }) {
  const { volume } = chart
  return (
    <PanelBox>
      <Toolbar chart={chart} active={active} />
      <Body $active={active}>
        <Stack>
          <ChartRow>
            <Gutter $width={chart.gutter} />
            <CellRow>
              <Cell $bold>{chart.title}</Cell>
              {chart.cells.map((c) => <Cell key={c}>{c}</Cell>)}
              {chart.study && <Cell $study>{chart.study}</Cell>}
            </CellRow>
            <AxisColumn><ScaleButton aria-label="Scale settings"><ScaleIcon /></ScaleButton></AxisColumn>
          </ChartRow>
          <ChartRow $grow>
            <Gutter $width={chart.gutter}>
              {chart.left && <Scale left labels={chart.left} y={chart.y} h={chart.h} tag={chart.leftTag} />}
            </Gutter>
            <PlotBox><Plot chart={chart} /></PlotBox>
            <AxisColumn><Scale labels={chart.prices} y={chart.y} h={chart.h} tag={chart.tag} /></AxisColumn>
          </ChartRow>
          <Divider />
          <ChartRow>
            <Gutter $width={chart.gutter} />
            <CellRow>
              <Cell>Volume</Cell>
              <Cell>{volume.value}</Cell>
            </CellRow>
            <AxisColumn />
          </ChartRow>
          <ChartRow $volume>
            <Gutter $width={chart.gutter}>
              {volume.leftLabels && <Scale left millions labels={[...volume.ticks, ['0', volume.y + 59]]} y={volume.y} h={59} />}
            </Gutter>
            <PlotBox><VolumePlot chart={chart} /></PlotBox>
            <AxisColumn><Scale millions labels={[...volume.ticks, ['0', volume.y + 59]]} y={volume.y} h={59} /></AxisColumn>
          </ChartRow>
          <ChartRow $times>
            <Gutter $width={chart.gutter} />
            <TimeBox>
              <PlotSvg>
                {chart.times.map(([x, text]) => (
                  <AxisText key={x} x={percent(x, chart.x, chart.w)} y="13">{text}</AxisText>
                ))}
              </PlotSvg>
            </TimeBox>
            <AxisColumn />
          </ChartRow>
          <Footer chart={chart} />
        </Stack>
        <SideBar>
          {sideTabs.map((t) => <SideTab key={t} $on={t === 'Chart'}>{t}</SideTab>)}
          <SideEnd />
        </SideBar>
      </Body>
    </PanelBox>
  )
}

function Taskbar() {
  return (
    <TaskRow>
      <svg width="18" height="18" viewBox="0 0 18 18"><path d="M9 0q8 2 8.500 8.500T10 18Q3 18 1 12.500 12 13 9 0z" fill="#ffc21a" /></svg>
      <Weather><span>23°C</span><span>Clear</span></Weather>
      <svg width="12" height="8" viewBox="0 0 12 8" fill="none" stroke="#111" strokeWidth="1.300"><path d="M1 7l5-5.500L11 7" /></svg>
      <svg width="17" height="12" viewBox="0 0 17 12"><path d="M4 11.500Q.5 11.300.5 8.200.6 5.500 3.500 5 4.500.7 8.500.7q3.800 0 4.800 3.800 3.200.3 3.200 3.500 0 3.300-3.500 3.500z" fill="#777" stroke="#222" /><path d="M2 10q1-4 5-3.500 3-1 4.500 1 3 0 3 3H4z" fill="#ddd" /></svg>
      <svg width="17" height="14" viewBox="0 0 17 14" fill="none" stroke="#111"><path d="M4.500 2.500h12v8h-12zM10.500 10.500v3M7 13.500h7M.5.500h4v5h-4zM2.500 5.500v8" /></svg>
      <svg width="17" height="14" viewBox="0 0 17 14" fill="none" stroke="#111"><path d="M.5 5h2.500L6.500 2v10L3 9H.5zM9 5q1 2 0 4M11 3.500q2.500 3.500 0 7" /><path d="M13.500 2q3.500 5 0 10" stroke="#999" /></svg>
      <Language>ENG</Language>
      <Clock><time>20:36</time><time>08.08.2021</time></Clock>
      <svg width="17" height="17" viewBox="0 0 17 17" fill="none" stroke="#111" strokeWidth="1.200"><path d="M1 1h15v12h-5v3l-3-3H1z" /></svg>
    </TaskRow>
  )
}

export default function App() {
  return (
    <Page>
      <GlobalStyle />
      <Journal>
        {journal.map((group) => (
          <JournalGroup key={group[0]}>
            {group.map((line) => <p key={line}>{line}</p>)}
          </JournalGroup>
        ))}
      </Journal>
      <Screen>
        <Platform>
          <TopBar>
            <TopCell $menu $first><span>Aug, 8</span><b>20:36:22</b></TopCell>
            <TopCell $menu>Account: <b>D-18977800 (canadian)</b></TopCell>
            <Spacer />
            <TopButton $width={89}><MailIcon />Messages</TopButton>
            <TopButton $width={78}><HeadsetIcon />Support</TopButton>
            <TopButton $width={96}><ChatIcon />Chat Rooms</TopButton>
            <TopButton $width={67}><GearIcon />Setup</TopButton>
            <WindowButton aria-label="Minimize">
              <svg width="8" height="3" viewBox="0 0 8 3"><path d="M0 0h8v3H0z" fill="#444" /></svg>
            </WindowButton>
            <WindowButton aria-label="Restore">
              <svg width="12" height="10" viewBox="0 0 12 10" fill="none" stroke="#444" strokeWidth="1.500"><path d="M3.800 3V.8h7.500v5.500H8.500M.8 3.800h7.500v5.500H.8z" /></svg>
            </WindowButton>
            <WindowButton $close aria-label="Close">
              <svg width="10" height="9" viewBox="0 0 10 9" stroke="#fff" strokeWidth="2.500"><path d="M1 .5l8 8M9 .5l-8 8" /></svg>
            </WindowButton>
          </TopBar>
          <MenuBar>
            {menuTabs.map((t) => <MenuTab key={t} $on={t === 'Charts'}>{t}</MenuTab>)}
          </MenuBar>
          <SubBar>
            <SubTab><span><ChartsIcon />Charts</span></SubTab>
            <SubTab $on><span><FlexIcon />Flexible Grid</span></SubTab>
            <SubTab><span><DepthIcon />Product Depth</span></SubTab>
            <Spacer />
            <Tool $width={13}>1</Tool>
            <Tool $width={35} $menu aria-label="Grid layout"><GridIcon /></Tool>
            <Tool $width={35} $menu aria-label="Grid menu"><ListIcon /></Tool>
          </SubBar>
          <Workspace>
            <Panel chart={mainChart} />
            <PanelPair>
              <Panel chart={dayChart} active />
              <Panel chart={quarterChart} />
            </PanelPair>
          </Workspace>
        </Platform>
        <Taskbar />
      </Screen>
    </Page>
  )
}

/* ---------- styles ---------- */

const Page = styled.div`
display: flex;
height: 100vh;
overflow: hidden;
background: #fff;
`

const Journal = styled.article`
width: 300px;
flex: none;
padding: 2px 0 0 12px;
font-family: 'Open Sans', 'Noto Sans', sans-serif;
font-size: 24px;
line-height: 35px;
color: #111;
white-space: nowrap;
`

const JournalGroup = styled.section`
margin-bottom: 35px;
`

const Screen = styled.div`
flex: 1;
min-width: 0;
display: flex;
flex-direction: column;
border-bottom: 2px solid #000;
`

const Platform = styled.main`
flex: 1;
min-height: 0;
display: flex;
flex-direction: column;
border: solid ${colors.accent};
border-width: 2px 2px 2px 0;
background: #dcdcdc;
`

const corner = css`
position: relative;
&::after {
  content: '';
  position: absolute;
  right: 2px;
  bottom: 1px;
  border: 2px solid #222;
  border-left-color: transparent;
  border-top-color: transparent;
}
`

const TopBar = styled.header`
display: flex;
height: 22px;
flex: none;
padding: 0 1px 1px 3px;
background: ${colors.bar};
border-bottom: 1px solid #b0b0b0;
`

const TopCell = styled.div`
display: flex;
align-items: center;
gap: ${(p) => (p.$first ? '5px' : '3px')};
padding: 2px 8px 0;
border-right: 1px solid #aaa;
padding-left: ${(p) => (p.$first ? '13px' : '9px')};
${corner}
`

const TopButton = styled.button`
display: flex;
align-items: center;
justify-content: center;
gap: 5px;
width: ${(p) => p.$width}px;
padding-top: 2px;
border-left: 1px solid #aaa;
white-space: nowrap;
`

const WindowButton = styled.button`
display: grid;
place-items: center;
width: ${(p) => (p.$close ? '33px' : '23px')};
border-left: 1px solid #ccc;
background: ${(p) => (p.$close ? '#c06a6a' : '#a3a3a3')};
`

const MenuBar = styled.nav`
display: flex;
height: 21px;
flex: none;
padding-left: 3px;
margin-right: 1px;
background: ${colors.menu};
`

const MenuTab = styled.button`
padding: 0 9px;
border-right: 1px solid #c4c4c4;
background: ${(p) => (p.$on ? '#fbfbfb' : 'none')};
`

const SubBar = styled.nav`
display: flex;
height: 21px;
flex: none;
margin: 0 1px 0 3px;
background: ${colors.tool};
`

const SubTab = styled.button`
padding: 2px ${(p) => (p.$on ? '3px' : '8px')} 2px;
padding-left: ${(p) => (p.$on ? '3px' : '10px')};
border-right: 1px solid #9c9c9c;
span {
  display: flex;
  align-items: center;
  gap: 6px;
  height: 16px;
  ${(p) => p.$on && 'padding: 0 5px; background: #fff; border-radius: 3px;'}
}
`

const Workspace = styled.section`
flex: 1;
min-height: 0;
display: grid;
grid-template-rows: minmax(0, 503fr) minmax(0, 458fr);
gap: 7px;
padding: 2px 1px 2px 3px;
`

const PanelPair = styled.div`
display: grid;
grid-template-columns: minmax(0, 804fr) minmax(0, 801fr);
gap: 4px;
min-height: 0;
`

const PanelBox = styled.section`
display: flex;
flex-direction: column;
min-width: 0;
min-height: 0;
background: ${colors.panel};
`

const ToolRow = styled.div`
display: flex;
height: 22px;
flex: none;
border-bottom: 1px solid #dcdcdc;
background: ${(p) => (p.$active ? colors.active : colors.tool)};
color: #333;
`

const SymbolBox = styled.div`
display: flex;
width: 96px;
height: 18px;
margin: 2px 0 0 3px;
padding: 1px;
background: #fdfdfd;
border: 1px solid #c8c8c8;
border-radius: 2px;
`

const SymbolInput = styled.input`
flex: 1;
min-width: 0;
padding-left: 6px;
color: #555;
`

const DropButton = styled.button`
display: grid;
place-items: center;
width: 17px;
background: ${colors.tool};
`

const LinkButton = styled.button`
width: 19px;
border-right: 1px solid rgba(0, 0, 0, 0.16);
${corner}
span {
  display: block;
  width: 10px;
  margin-left: 5px;
  border-radius: 2px;
  background: #b65a08;
  color: #fff;
  line-height: 12px;
}
`

const Company = styled.div`
display: flex;
align-items: center;
width: 141px;
padding-left: 11px;
border-right: 1px solid rgba(0, 0, 0, 0.16);
color: #4a4a4a;
white-space: nowrap;
`

const Last = styled.strong`
display: flex;
align-items: center;
width: 49px;
padding-left: 6px;
border-right: 1px solid rgba(0, 0, 0, 0.16);
font-size: 14px;
color: #000;
`

const Quote = styled.div`
display: flex;
flex-direction: column;
justify-content: center;
width: ${(p) => (p.$wide ? '48px' : '42px')};
padding-left: 6px;
border-right: 1px solid rgba(0, 0, 0, 0.16);
font-size: 9px;
line-height: 9px;
color: ${(p) => (p.$down ? '#b04848' : '#333')};
`

const Spacer = styled.div`
flex: 1;
`

const Tool = styled.button`
display: flex;
align-items: center;
justify-content: center;
gap: 5px;
width: ${(p) => p.$width}px;
border-left: 1px solid rgba(0, 0, 0, 0.16);
font-weight: ${(p) => (p.$bold ? 'bold' : 'normal')};
white-space: nowrap;
${(p) => p.$menu && corner}
`

const Body = styled.div`
flex: 1;
min-height: 0;
display: flex;
${(p) => p.$active && `border: solid ${colors.active}; border-width: 0 1px;`}
`

const Stack = styled.div`
flex: 1;
min-width: 0;
display: flex;
flex-direction: column;
`

const ChartRow = styled.div`
display: flex;
flex: none;
min-height: 0;
${(p) => p.$grow && 'flex: 1;'}
${(p) => p.$volume && 'height: 60px;'}
${(p) => p.$times && 'height: 19px;'}
`

const Gutter = styled.div`
flex: none;
width: ${(p) => p.$width}px;
`

const AxisColumn = styled.div`
flex: none;
width: 61px;
`

const ScaleButton = styled.button`
display: grid;
align-items: center;
padding: 0 5px;
height: 20px;
`

const CellRow = styled.div`
flex: 1;
min-width: 0;
display: flex;
height: 20px;
border: 1px solid ${colors.line};
`

const Cell = styled.div`
display: flex;
align-items: center;
padding: 0 3px;
border-right: 1px solid ${colors.line};
white-space: nowrap;
font-weight: ${(p) => (p.$bold ? 'bold' : 'normal')};
color: ${(p) => (p.$study ? '#0a850a' : p.$bold ? '#000' : '#2c2c2c')};
`

const PlotBox = styled.div`
flex: 1;
min-width: 0;
display: flex;
border: solid ${colors.line};
border-width: 0 1px 1px;
background: #fdfdfd;
`

const TimeBox = styled.div`
flex: 1;
min-width: 0;
padding: 0 1px;
`

const Divider = styled.div`
height: 3px;
flex: none;
border-top: 1px solid #fff;
border-bottom: 1px solid #fff;
background: #d5d5d5;
`

const PlotSvg = styled.svg`
display: block;
width: 100%;
height: 100%;
`

const ChartText = styled.text`
font-size: 11px;
font-weight: ${(p) => (p.$bold ? 'bold' : 'normal')};
fill: ${(p) => p.$tone || '#111'};
`

const AxisText = styled.text`
font-size: 11px;
fill: #6c6c6c;
`

const FooterRow = styled.div`
display: flex;
align-items: flex-start;
height: 16px;
flex: none;
background: #fdfdfd;
`

const ScrollButton = styled.button`
display: grid;
place-items: center;
width: 13px;
height: 13px;
background: #e3e3e3;
`

const Track = styled.div`
flex: 1;
display: grid;
grid-template-columns: 63fr 29fr 170fr 261fr;
height: 13px;
background: #ededed;
`

const CollapseButton = styled.button`
grid-column: 2;
display: grid;
place-items: center;
height: 16px;
background: ${colors.tool};
`

const Thumb = styled.div`
grid-column: 4;
display: grid;
place-items: center;
background: #cacaca;
`

const FootTool = styled.button`
display: grid;
place-items: center;
width: 20px;
height: 14px;
flex: none;
`

const DrawingSet = styled.button`
height: 14px;
width: 119px;
flex: none;
padding-left: 10px;
text-align: left;
white-space: nowrap;
color: #111;
${corner}
`

const SideBar = styled.nav`
display: flex;
flex-direction: column;
flex: none;
width: 21px;
background: ${colors.tool};
border-left: 1px solid #999;
overflow: hidden;
`

const SideTab = styled.button`
writing-mode: vertical-rl;
transform: rotate(180deg);
width: 20px;
padding: 6px 0 12px;
border-bottom: 1px solid #999;
background: ${(p) => (p.$on ? '#fafafa' : 'none')};
line-height: 20px;
white-space: nowrap;
`

const SideEnd = styled.div`
flex: 1;
border-top: 1px solid #999;
`

const TaskRow = styled.footer`
display: flex;
align-items: center;
justify-content: flex-end;
height: 40px;
flex: none;
gap: 8px;
padding-right: 25px;
background: linear-gradient(90deg, #d3d9e3, #dadce6 45%, #cfdde6);
font-family: 'Open Sans', sans-serif;
color: #111;
`

const Weather = styled.div`
display: flex;
gap: 9px;
margin-right: 8px;
font-size: 14px;
`

const Language = styled.span`
font-size: 12px;
`

const Clock = styled.div`
display: flex;
flex-direction: column;
align-items: center;
margin: 0 8px 0 4px;
line-height: 18px;
`
